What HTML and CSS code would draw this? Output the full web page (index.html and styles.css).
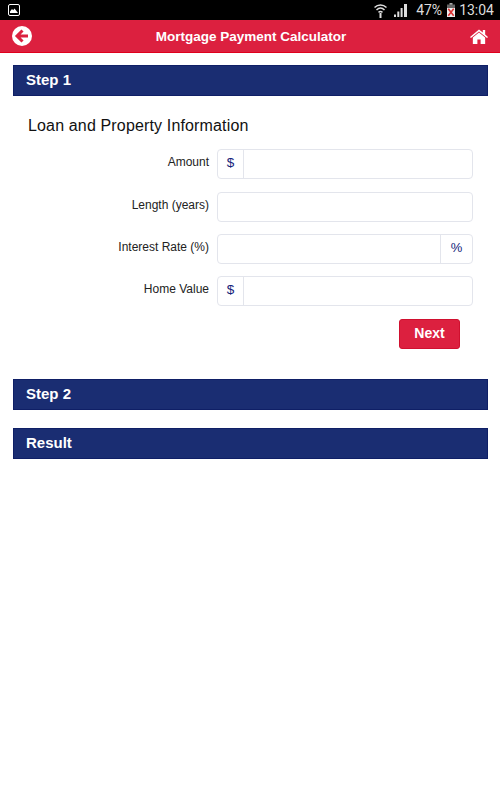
FILE: index.html

```html
<!doctype html>
<html lang="en">
  <head>
    <meta charset="utf-8">
    <title>Mortgage Payment Calculator</title>
    <link rel="stylesheet" href="styles.css">
  </head>
  <body>
    <div class="statusbar">
      <svg class="status-pic" width="12" height="12" viewBox="0 0 12 12">
        <rect x="0.5" y="0.5" width="11" height="11" rx="1.500" fill="#000" stroke="#fff"/>
        <path d="M2 9V7.500L4 5l1.200 1.200L6.500 4.500 10 9z" fill="#fff"/>
      </svg>
      <div class="status-right">
        <svg width="13" height="15" viewBox="0 0 13 15">
          <path d="M0.500 4.500C4 1 9 1 12.500 4.500" fill="none" stroke="#ddd" stroke-width="1.500"/>
          <path d="M2.500 7C5 4.600 8 4.600 10.500 7" fill="none" stroke="#ddd" stroke-width="1.500"/>
          <path d="M4.500 9.300C5.700 8.300 7.300 8.300 8.500 9.300" fill="none" stroke="#ddd" stroke-width="1.500"/>
          <rect x="5.500" y="10" width="2" height="5" fill="#ddd"/>
        </svg>
        <svg class="status-signal" width="13" height="13" viewBox="0 0 13 13">
          <path d="M0 13h2v-2.500H0zM3.300 13h2V7.500h-2zM6.600 13h2V4h-2zM10 13h3V0h-3z" fill="#ddd"/>
        </svg>
        <span class="status-pct">47%</span>
        <svg width="8" height="14" viewBox="0 0 8 14">
          <rect x="2.500" y="0" width="3" height="2" fill="#aaa"/>
          <rect x="0" y="1.500" width="8" height="3.500" fill="#666"/>
          <rect x="0" y="5" width="8" height="9" fill="#eee"/>
          <path d="M1.300 5.800l5.400 7M6.700 5.800l-5.400 7" stroke="#d33" stroke-width="1.600"/>
        </svg>
        <span class="status-time">13:04</span>
      </div>
    </div>

    <header class="topbar">
      <svg class="back-icon" width="20" height="20" viewBox="0 0 20 20">
        <circle cx="10" cy="10" r="10" fill="#fff"/>
        <path d="M10.500 4.500L5 10l5.500 5.500M5.500 10H16" fill="none" stroke="#dc203f" stroke-width="3"/>
      </svg>
      <h1>Mortgage Payment Calculator</h1>
      <svg class="home-icon" width="18" height="15" viewBox="0 0 19 17" preserveAspectRatio="none">
        <path d="M9.500 0.500L0 9l1 1.300 8.500-7.500 8.500 7.500L19 9l-3-2.700V1h-2.500v3.100z" fill="#fff"/>
        <path d="M9.500 4L3 9.700V17h4.800v-5h3.400v5H16V9.700z" fill="#fff"/>
      </svg>
    </header>

    <main class="content">
      <div class="step-bar">Step 1</div>

      <form class="loan-form">
        <h2>Loan and Property Information</h2>

        <div class="form-row">
          <label>Amount</label>
          <div class="input-group">
            <span class="addon addon-left">$</span>
            <input type="text">
          </div>
        </div>

        <div class="form-row">
          <label>Length (years)</label>
          <div class="input-group">
            <input type="text">
          </div>
        </div>

        <div class="form-row">
          <label>Interest Rate (%)</label>
          <div class="input-group">
            <input type="text">
            <span class="addon addon-right">%</span>
          </div>
        </div>

        <div class="form-row">
          <label>Home Value</label>
          <div class="input-group">
            <span class="addon addon-left">$</span>
            <input type="text">
          </div>
        </div>

        <div class="form-actions">
          <button type="button" class="next-btn">Next</button>
        </div>
      </form>

      <div class="step-bar step-two">Step 2</div>
      <div class="step-bar step-result">Result</div>
    </main>
  </body>
</html>
```

FILE: styles.css

```css
* {
    box-sizing: border-box;
}

body {
    margin: 0;
    background: #fff;
    font-family: "Liberation Sans", Arial, sans-serif;
    color: #111;
}

.statusbar {
    height: 20px;
    background: #000;
    display: flex;
    align-items: center;
    justify-content: space-between;
    padding: 0 6px 0 8px;
}

.status-right {
    display: flex;
    align-items: center;
    color: #ddd;
    font-family: Roboto, sans-serif;
    font-size: 14px;
}

.status-signal {
    margin-left: 7px;
}

.status-pct {
    margin-left: 9px;
    margin-right: 5px;
}

.status-time {
    margin-left: 4px;
}

.topbar {
    height: 33px;
    background: #dc203f;
    border-bottom: 1px solid #e0001c;
    display: flex;
    align-items: center;
    justify-content: space-between;
    padding: 0 12px;
}

.topbar h1 {
    margin: 0;
    font-size: 13.500px;
    font-weight: bold;
    color: #fff;
}

.content {
    padding: 12px 12px 0 13px;
}

.step-bar {
    height: 31px;
    padding-left: 12px;
    background: #1a2d72;
    border: 1px solid #0f1f66;
    color: #fff;
    font-size: 15px;
    font-weight: bold;
    line-height: 28px;
}

.loan-form {
    padding: 0 15px 0 15px;
}

.loan-form h2 {
    margin: 0;
    padding-top: 21px;
    height: 53.300px;
    font-size: 16px;
    font-weight: normal;
    letter-spacing: 0.15px;
    color: #111;
}

.form-row {
    display: flex;
    align-items: center;
    height: 30px;
    margin-bottom: 12.300px;
}

.form-row label {
    width: 189px;
    padding-right: 8px;
    text-align: right;
    font-size: 12px;
    color: #222;
    position: relative;
    top: -2px;
}

.input-group {
    flex: 1;
    height: 30px;
    display: flex;
    background: #fff;
    border: 1px solid #e3e5ec;
    border-radius: 4px;
}

.input-group input {
    flex: 1;
    min-width: 0;
    border: 0;
    padding: 0;
    background: transparent;
}

.addon {
    width: 26px;
    color: #14237a;
    font-size: 13.500px;
    line-height: 26px;
    text-align: center;
}

.addon-left {
    border-right: 1px solid #e3e5ec;
}

.addon-right {
    width: 32px;
    border-left: 1px solid #e3e5ec;
    font-size: 13px;
}

.form-actions {
    display: flex;
    justify-content: flex-end;
    padding: 0.500px 13px 0 0;
}

.next-btn {
    width: 61px;
    height: 30px;
    padding: 0 0 2px;
    background: #dc203f;
    border: 1px solid #d0102f;
    border-radius: 3px;
    color: #fff;
    font-family: inherit;
    font-size: 14px;
    font-weight: bold;
}

.step-two {
    margin-top: 30px;
}

.step-result {
    margin-top: 18px;
}
```
